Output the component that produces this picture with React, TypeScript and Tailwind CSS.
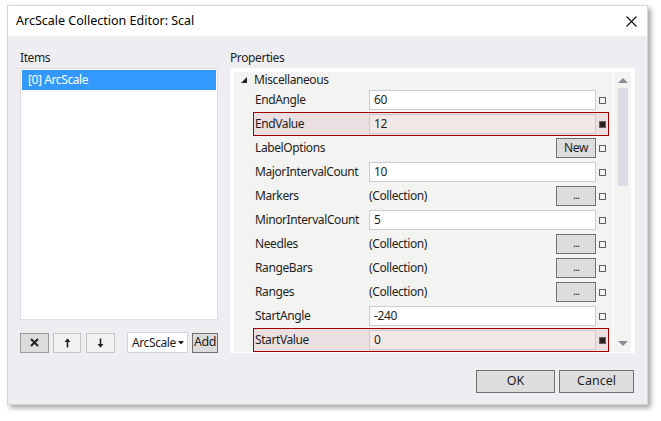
import React from 'react';

type Row = {
  name: string;
  kind: 'text' | 'plain' | 'button' | 'none';
  value?: string;
  btn?: string;
  hot?: boolean;
};

const rows: Row[] = [
  { name: 'EndAngle', kind: 'text', value: '60' },
  { name: 'EndValue', kind: 'text', value: '12', hot: true },
  { name: 'LabelOptions', kind: 'none', btn: 'New' },
  { name: 'MajorIntervalCount', kind: 'text', value: '10' },
  { name: 'Markers', kind: 'plain', value: '(Collection)', btn: '...' },
  { name: 'MinorIntervalCount', kind: 'text', value: '5' },
  { name: 'Needles', kind: 'plain', value: '(Collection)', btn: '...' },
  { name: 'RangeBars', kind: 'plain', value: '(Collection)', btn: '...' },
  { name: 'Ranges', kind: 'plain', value: '(Collection)', btn: '...' },
  { name: 'StartAngle', kind: 'text', value: '-240' },
  { name: 'StartValue', kind: 'text', value: '0', hot: true },
];

const PropRow: React.FC<{ row: Row }> = ({ row }) => (
  <div className="h-[24px] flex items-center pl-[19px] pr-[4px]">
    <div
      className={`flex items-center h-[24px] w-full border ${
        row.hot ? 'border-[#a00000] bg-[#ecdfe1]' : 'border-transparent'
      }`}
    >
      <div className="w-[115px] pl-[1px] shrink-0 truncate">{row.name}</div>
      <div className="flex-1 flex items-center h-full">
        {row.kind === 'text' && (
          <div
            className={`flex-1 h-[20px] border flex items-center pl-[4px] ${
              row.hot ? 'bg-[#f3e7e8] border-[#d2c6cf]' : 'bg-white border-[#cccbd6]'
            }`}
          >
            {row.value}
          </div>
        )}
        {row.kind === 'plain' && <div className="flex-1">{row.value}</div>}
        {row.kind === 'none' && <div className="flex-1" />}
        {row.kind !== 'text' && row.btn && (
          <div className="w-[40px] h-[20px] border border-[#707070] bg-[#dddddd] flex items-center justify-center leading-none">
            {row.btn === 'New' ? 'New' : <span className="text-[11px] -mt-[4px] tracking-[-1px]">...</span>}
          </div>
        )}
        <div className="w-[12px] flex justify-end pr-[2px]">
          <div
            className={`w-[7px] h-[7px] border border-[#606060] ${row.hot ? 'bg-[#2e1f22]' : 'bg-transparent'}`}
          />
        </div>
      </div>
    </div>
  </div>
);

const SmallBtn: React.FC<{ children: React.ReactNode; pressed?: boolean; w: string }> = ({ children, pressed, w }) => (
  <div
    className={`${w} h-[20px] flex items-center justify-center border ${
      pressed ? 'bg-[#dcdcdc] border-[#9a9a9a]' : 'bg-[#f2f2f2] border-[#c4c4c4]'
    }`}
  >
    {children}
  </div>
);

export default function App() {
  return (
    <div
      className="w-[661px] h-[421px] bg-white pt-[5px] pl-[7px] text-[12px] text-[#1e1e1e]"
      style={{ fontFamily: '"Noto Sans", "Open Sans", sans-serif' }}
    >
      <div className="w-[641px] h-[400px] flex flex-col border border-[#d6d6d6] shadow-[3px_3px_5px_rgba(0,0,0,0.35)]">
        {/* title bar */}
        <div className="h-[30px] bg-white flex items-center justify-between pl-[8px] pr-[10px] shrink-0">
          <span className="text-[12.5px] text-black">ArcScale Collection Editor: Scal</span>
          <svg width="11" height="11" viewBox="0 0 11 11">
            <path d="M0.5 0.5 L10.5 10.5 M10.5 0.5 L0.5 10.5" stroke="#111" strokeWidth="1.1" />
          </svg>
        </div>

        {/* body */}
        <div className="flex-1 bg-[#eeedf2] flex flex-col pl-[12px] pr-[12px] pt-[14px] tracking-[-0.4px]">
          <div className="h-[303px] flex gap-[12px]">
            {/* items column */}
            <div className="w-[198px] flex flex-col">
              <div className="h-[18px] leading-[16px]">Items</div>
              <div className="h-[254px] bg-white border border-[#dcdce2] p-[1px]">
                <div className="h-[20px] bg-[#3399ff] text-white flex items-center pl-[6px]">[0] ArcScale</div>
              </div>
              <div className="flex items-center mt-[12px]">
                <SmallBtn pressed w="w-[29px]">
                  <svg width="9" height="9" viewBox="0 0 9 9">
                    <path d="M1 1 L8 8 M8 1 L1 8" stroke="#222" strokeWidth="2" />
                  </svg>
                </SmallBtn>
                <div className="w-[4px]" />
                <SmallBtn w="w-[28px]">
                  <svg width="7" height="10" viewBox="0 0 7 10">
                    <path d="M3.5 1 L3.5 9.5" stroke="#222" strokeWidth="1.6" />
                    <path d="M0.5 4 L3.5 0.5 L6.5 4 Z" fill="#222" />
                  </svg>
                </SmallBtn>
                <div className="w-[5px]" />
                <SmallBtn w="w-[29px]">
                  <svg width="7" height="10" viewBox="0 0 7 10">
                    <path d="M3.5 0.5 L3.5 9" stroke="#222" strokeWidth="1.6" />
                    <path d="M0.5 6 L3.5 9.5 L6.5 6 Z" fill="#222" />
                  </svg>
                </SmallBtn>
                <div className="w-[12px]" />
                <div className="w-[61px] h-[21px] bg-white border border-[#d4d4dc] flex items-center pl-[4px] gap-[2px]">
                  <span>ArcScale</span>
                  <svg width="6" height="4" viewBox="0 0 6 4">
                    <path d="M0 0 L6 0 L3 3.5 Z" fill="#222" />
                  </svg>
                </div>
                <div className="w-[4px]" />
                <div className="w-[26px] h-[20px] bg-[#dcdcdc] border border-[#707070] flex items-center justify-center text-[12.5px]">
                  Add
                </div>
              </div>
            </div>

            {/* properties column */}
            <div className="w-[405px] flex flex-col">
              <div className="h-[18px] leading-[16px]">Properties</div>
              <div className="h-[285px] bg-white pt-[4px] pl-[4px] pr-[4px] pb-[1px]">
                <div className="h-full bg-[#f3f4f2] flex overflow-hidden">
                  <div className="flex-1 flex flex-col">
                    <div className="h-[16px] shrink-0 flex items-center pl-[7px] gap-[7px]">
                      <svg width="6" height="6" viewBox="0 0 6 6">
                        <path d="M6 0 L6 6 L0 6 Z" fill="#222" />
                      </svg>
                      <span>Miscellaneous</span>
                    </div>
                    {rows.map((r) => (
                      <PropRow key={r.name} row={r} />
                    ))}
                  </div>
                  <div className="w-[18px] border-l border-white flex flex-col items-center pt-[6px]">
                    <svg width="10" height="5" viewBox="0 0 10 5">
                      <path d="M0 5 L5 0 L10 5 Z" fill="#8a8a98" />
                    </svg>
                    <div className="w-[10px] h-[98px] bg-[#dcdce6] mt-[5px]" />
                    <div className="flex-1" />
                    <svg width="10" height="5" viewBox="0 0 10 5" className="mb-[6px]">
                      <path d="M0 0 L10 0 L5 5 Z" fill="#8a8a98" />
                    </svg>
                  </div>
                </div>
              </div>
            </div>
          </div>

          {/* footer */}
          <div className="flex justify-end gap-[4px] mt-[17px] pr-[1px] tracking-normal">
            <div className="w-[79px] h-[23px] bg-[#dddddd] border border-[#707070] flex items-center justify-center text-[12.5px]">OK</div>
            <div className="w-[75px] h-[23px] bg-[#dddddd] border border-[#707070] flex items-center justify-center text-[12.5px]">Cancel</div>
          </div>
        </div>
      </div>
    </div>
  );
}
